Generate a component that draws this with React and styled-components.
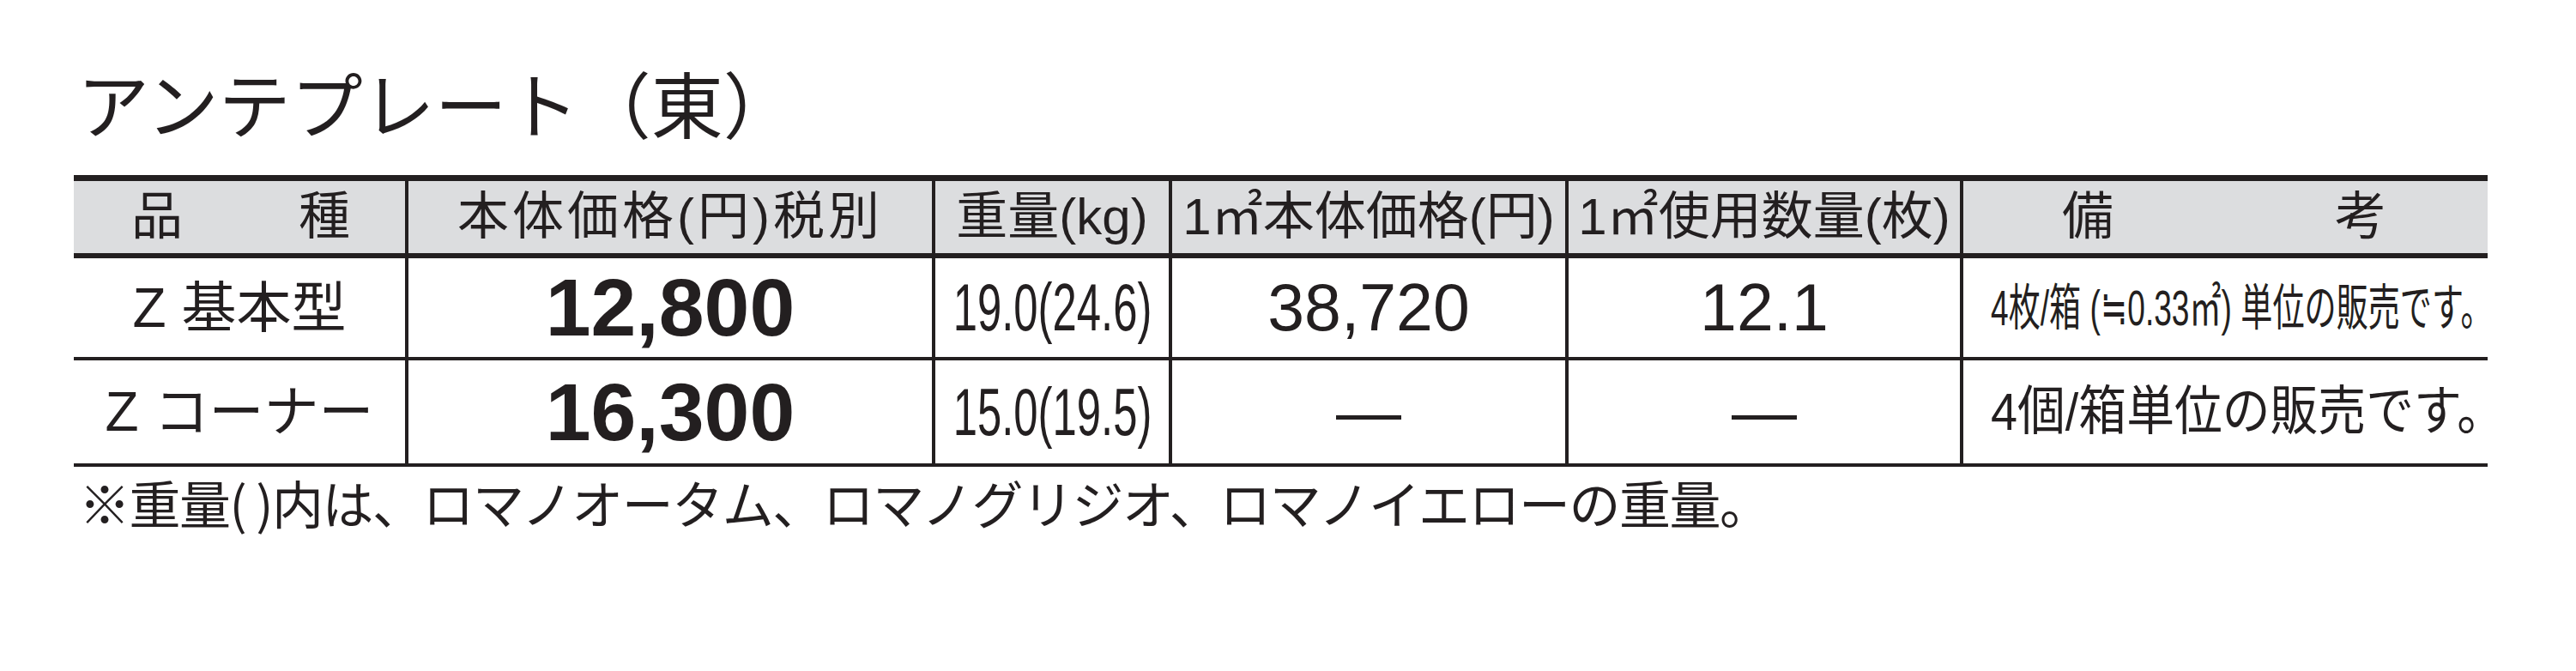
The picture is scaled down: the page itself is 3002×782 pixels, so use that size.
import React from 'react';
import styled, { createGlobalStyle } from 'styled-components';

const INK = '#231f20';

const Global = createGlobalStyle`
  *, *::before, *::after { box-sizing: border-box; }
  html, body { margin: 0; padding: 0; background: #ffffff; }
  body {
    font-family: "Liberation Sans", "Noto Sans CJK JP", sans-serif;
    color: ${INK};
  }
`;

const Page = styled.main`
  width: 3002px;
  height: 782px;
  padding: 77px 0 0 86px;
  overflow: hidden;
`;

const Title = styled.h1`
  margin: 0 0 43px 4px;
  font-family: "Noto Sans CJK JP", sans-serif;
  font-weight: 400;
  font-size: 84px;
  line-height: 84px;
  white-space: nowrap;
`;

const Table = styled.table`
  border-collapse: separate;
  border-spacing: 0;
  table-layout: fixed;
  width: 2813px;
  border-top: 7px solid ${INK};
`;

const HeadCell = styled.th`
  height: 90px;
  padding: 0;
  background: #dcdddf;
  border-bottom: 6px solid ${INK};
  border-left: ${(p) => (p.$first ? '0' : `4px solid ${INK}`)};
  font-weight: 400;
  font-size: 60px;
  line-height: 1;
  vertical-align: middle;
`;

const BodyCell = styled.td`
  height: ${(p) => p.$h}px;
  padding: 0;
  border-bottom: 4px solid ${INK};
  border-left: ${(p) => (p.$first ? '0' : `4px solid ${INK}`)};
  vertical-align: middle;
  line-height: 1;
`;

const Fill = styled.div`
  display: flex;
  align-items: center;
  justify-content: ${(p) => p.$justify || 'center'};
  padding: ${(p) => p.$pad || '0'};
  white-space: nowrap;
  letter-spacing: ${(p) => p.$ls || 0}px;
`;

const Name = styled.span`
  font-size: 64px;
  white-space: nowrap;
`;

const Price = styled.span`
  font-family: "Liberation Sans", sans-serif;
  font-weight: 700;
  font-size: 95px;
`;

const Num = styled.span`
  font-family: "Liberation Sans", sans-serif;
  font-size: 77px;
`;

const Squeeze = styled.span`
  display: inline-block;
  white-space: nowrap;
  font-size: ${(p) => p.$size}px;
  transform: scaleX(${(p) => p.$x});
  transform-origin: ${(p) => p.$origin || 'center'};
  letter-spacing: ${(p) => p.$ls || 0}px;
`;

const Dash = styled.span`
  font-family: "Liberation Sans", sans-serif;
  font-size: 76px;
`;

const Note = styled.p`
  margin: 11px 0 0 6px;
  font-family: "Noto Sans CJK JP", sans-serif;
  font-size: 60px;
  line-height: 1;
  letter-spacing: -1.5px;
  white-space: nowrap;
`;

const cols = [386, 614, 276, 462, 460, 615];

export default function App() {
  return (
    <>
      <Global />
      <Page>
        <Title>アンテプレート（東）</Title>
        <Table>
          <colgroup>
            {cols.map((w, i) => (
              <col key={i} style={{ width: w }} />
            ))}
          </colgroup>
          <thead>
            <tr>
              <HeadCell $first>
                <Fill $justify="space-between" $pad="0 64px 0 67px">
                  <span>品</span>
                  <span>種</span>
                </Fill>
              </HeadCell>
              <HeadCell>
                <Fill $ls={4}>本体価格(円)税別</Fill>
              </HeadCell>
              <HeadCell>
                <Fill>重量(kg)</Fill>
              </HeadCell>
              <HeadCell>
                <Fill>1㎡本体価格(円)</Fill>
              </HeadCell>
              <HeadCell>
                <Fill>1㎡使用数量(枚)</Fill>
              </HeadCell>
              <HeadCell>
                <Fill $justify="space-between" $pad="0 118px 0 115px">
                  <span>備</span>
                  <span>考</span>
                </Fill>
              </HeadCell>
            </tr>
          </thead>
          <tbody>
            <tr>
              <BodyCell $first $h={119}>
                <Fill><Name>Z 基本型</Name></Fill>
              </BodyCell>
              <BodyCell $h={119}>
                <Fill><Price>12,800</Price></Fill>
              </BodyCell>
              <BodyCell $h={119}>
                <Fill><Squeeze $size={77} $x={0.66}>19.0(24.6)</Squeeze></Fill>
              </BodyCell>
              <BodyCell $h={119}>
                <Fill><Num>38,720</Num></Fill>
              </BodyCell>
              <BodyCell $h={119}>
                <Fill><Num>12.1</Num></Fill>
              </BodyCell>
              <BodyCell $h={119}>
                <Fill $justify="flex-start" $pad="0 0 0 32px">
                  <Squeeze $size={58} $x={0.64} $origin="left center">4枚/箱 (≒0.33㎡) 単位の販売です。</Squeeze>
                </Fill>
              </BodyCell>
            </tr>
            <tr>
              <BodyCell $first $h={124}>
                <Fill><Name>Z コーナー</Name></Fill>
              </BodyCell>
              <BodyCell $h={124}>
                <Fill><Price>16,300</Price></Fill>
              </BodyCell>
              <BodyCell $h={124}>
                <Fill><Squeeze $size={77} $x={0.66}>15.0(19.5)</Squeeze></Fill>
              </BodyCell>
              <BodyCell $h={124}>
                <Fill><Dash>—</Dash></Fill>
              </BodyCell>
              <BodyCell $h={124}>
                <Fill><Dash>—</Dash></Fill>
              </BodyCell>
              <BodyCell $h={124}>
                <Fill $justify="flex-start" $pad="0 0 0 32px">
                  <Squeeze $size={62} $x={0.9} $origin="left center">4個/箱単位の販売です。</Squeeze>
                </Fill>
              </BodyCell>
            </tr>
          </tbody>
        </Table>
        <Note>※重量( )内は、ロマノオータム、ロマノグリジオ、ロマノイエローの重量。</Note>
      </Page>
    </>
  );
}
